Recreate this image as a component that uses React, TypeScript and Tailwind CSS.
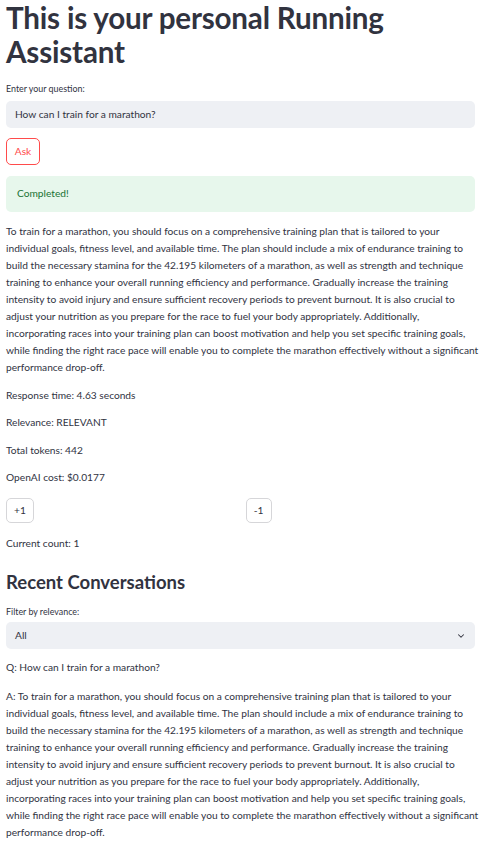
import React, { useState } from 'react';

// line breaks follow the reference layout
const answerLines = [
  'To train for a marathon, you should focus on a comprehensive training plan that is tailored to your',
  'individual goals, fitness level, and available time. The plan should include a mix of endurance training to',
  'build the necessary stamina for the 42.195 kilometers of a marathon, as well as strength and technique',
  'training to enhance your overall running efficiency and performance. Gradually increase the training',
  'intensity to avoid injury and ensure sufficient recovery periods to prevent burnout. It is also crucial to',
  'adjust your nutrition as you prepare for the race to fuel your body appropriately. Additionally,',
  'incorporating races into your training plan can boost motivation and help you set specific training goals,',
  'while finding the right race pace will enable you to complete the marathon effectively without a significant',
  'performance drop-off.',
];

const stats = [
  'Response time: 4.63 seconds',
  'Relevance: RELEVANT',
  'Total tokens: 442',
  'OpenAI cost: $0.0177',
];

const Answer = ({ prefix }: { prefix?: string }) => (
  <p className="leading-[17px]">
    {answerLines.map((line, i) => (
      <span key={i} className="block whitespace-nowrap">
        {i === 0 && prefix ? prefix + line : line}
      </span>
    ))}
  </p>
);

export default function App() {
  const [count, setCount] = useState(1);

  return (
    <div className="min-h-screen bg-white text-[#31333f] font-['Lato','Noto_Sans',sans-serif] text-[10.2px]">
      <div className="pl-[6px] pr-[8px] pt-[1px]">
        <h1 className="text-[29.6px] leading-[34px] font-bold tracking-[-0.2px]">
          This is your personal Running Assistant
        </h1>

        <label className="block mt-[13px] text-[8.9px] leading-[14px]">Enter your question:</label>
        <div className="mt-[5px] h-[27px] rounded-[5px] bg-[#eef0f4] flex items-center px-[9px] leading-none">
          How can I train for a marathon?
        </div>

        <button className="mt-[10px] h-[27px] w-[34px] rounded-[5px] border border-[#ff4b4b] text-[#ff4b4b] bg-white leading-none">
          Ask
        </button>

        <div className="mt-[11px] h-[36px] rounded-[5px] bg-[#e7f7ec] text-[#177233] flex items-center px-[11px]">
          Completed!
        </div>

        <div className="mt-[11px]">
          <Answer />
        </div>

        <div className="mt-[5px]">
          {stats.map((s) => (
            <p key={s} className="leading-[17px] mt-[10.5px]">
              {s}
            </p>
          ))}
        </div>

        <div className="mt-[12px] grid grid-cols-2 gap-[8px]">
          <div>
            <button
              onClick={() => setCount((c) => c + 1)}
              className="h-[25px] w-[28px] rounded-[5px] border border-[#d6d6d9] bg-white leading-none"
            >
              +1
            </button>
          </div>
          <div className="pl-[1px]">
            <button
              onClick={() => setCount((c) => c - 1)}
              className="h-[25px] w-[26px] rounded-[5px] border border-[#d6d6d9] bg-white leading-none"
            >
              -1
            </button>
          </div>
        </div>

        <p className="mt-[12px] leading-[17px]">Current count: {count}</p>

        <h2 className="mt-[17px] text-[18.5px] leading-[26px] font-bold">Recent Conversations</h2>

        <label className="block mt-[10px] text-[8.9px] leading-[14px]">Filter by relevance:</label>
        <div className="mt-[3px] h-[27px] rounded-[5px] bg-[#eef0f4] flex items-center justify-between pl-[9px] pr-[9px] leading-none">
          <span>All</span>
          <svg width="10" height="10" viewBox="0 0 24 24" fill="none" stroke="#31333f" strokeWidth="2.5" strokeLinecap="round" strokeLinejoin="round">
            <path d="M6 9l6 6 6-6" />
          </svg>
        </div>

        <p className="mt-[10px] leading-[17px]">Q: How can I train for a marathon?</p>
        <div className="mt-[12px]">
          <Answer prefix="A: " />
        </div>
      </div>
    </div>
  );
}
